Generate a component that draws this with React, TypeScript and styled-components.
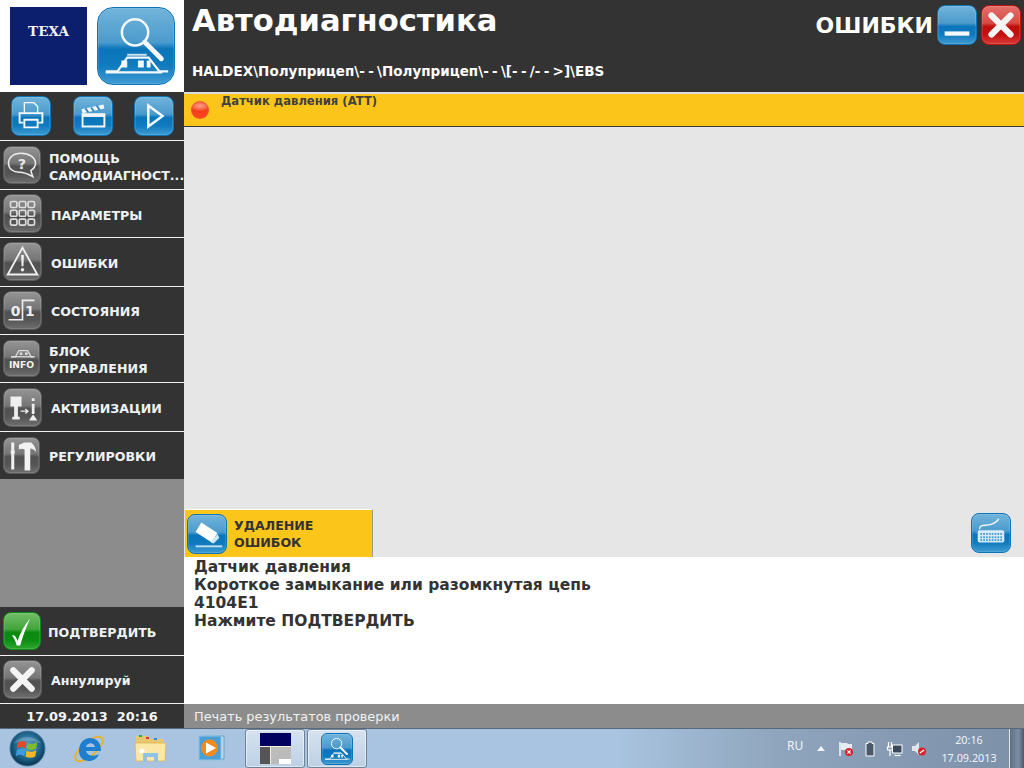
import * as React from 'react';
import styled, { createGlobalStyle, css } from 'styled-components';

const GlobalStyle = createGlobalStyle`
	html, body { margin: 0; padding: 0; background: #333; }
	body { font-family: "DejaVu Sans", Verdana, sans-serif; overflow: hidden; }
`;

type Tone = 'blue' | 'gray' | 'green' | 'red';

const tones = {
	blue: css`
		background: linear-gradient(#72b4db 0%, #4b9bcd 45%, #0a75ba 54%, #0f7abd 75%, #3f9bd2 100%);
		border-color: #0d74b6;
	`,
	gray: css`
		background: linear-gradient(#949494 0%, #767676 45%, #505050 54%, #555 75%, #6e6e6e 100%);
		border-color: #5a5a5a;
	`,
	green: css`
		background: linear-gradient(#72bd68 0%, #43a53a 45%, #0b8a10 54%, #0c8c12 75%, #2ea52d 100%);
		border-color: #10881a;
	`,
	red: css`
		background: linear-gradient(#e2706a 0%, #d84a44 45%, #c00d0d 54%, #c20f0f 75%, #d83a36 100%);
		border-color: #bc1313;
	`
};

const Tile = styled.div<{ $tone: Tone; $w: number; $h?: number }>`
	flex: none;
	box-sizing: border-box;
	width: ${(p) => p.$w}px;
	height: ${(p) => p.$h || p.$w}px;
	border: 1px solid;
	border-radius: ${(p) => Math.round(p.$w * 0.2)}px;
	box-shadow: inset 0 0 0 1px rgba(255, 255, 255, 0.12);
	${(p) => tones[p.$tone]};
	svg {
		display: block;
		width: 100%;
		height: 100%;
	}
`;

const Line = { fill: 'none', stroke: '#f4f8fb', strokeWidth: 2 };
const ThinLine = { fill: 'none', stroke: '#f4f8fb', strokeWidth: 1.4 };

const TrainIcon = () => (
	<svg viewBox="0 0 78 78">
		<circle cx="38" cy="25" r="13.5" fill="none" stroke="#f4f8fb" strokeWidth="2.6" />
		<path d="M48 35 L65 52" stroke="#f4f8fb" strokeWidth="5" strokeLinecap="round" />
		<path d="M8 65 H20 L30 51 H52 L63 65 H72" fill="none" stroke="#f4f8fb" strokeWidth="2.2" />
		<path d="M8 66 H66" stroke="#f4f8fb" strokeWidth="2.2" />
		<path d="M30 48 H50" stroke="#cfe3f0" strokeWidth="2" />
		<path d="M24 54 H30 V61 H24 Z M41 54 H47 V61 H41 Z M50 54 H54 V61 H50 Z" fill="#f4f8fb" />
	</svg>
);

const PrinterIcon = () => (
	<svg viewBox="0 0 40 40">
		<path d="M13 17 V6 H23 L27 10 V17" {...ThinLine} />
		<path d="M12 27 H8 V17 H32 V27 H28" {...Line} />
		<path d="M13 24 H27 V32 H13 Z" {...Line} />
	</svg>
);

const ClapperIcon = () => (
	<svg viewBox="0 0 40 40">
		<path d="M9 18 H32 V31 H9 Z" {...Line} />
		<path d="M8 13 L31 8 L32 12 L9 17 Z" fill="#f4f8fb" />
		<path d="M12 12 L15 16 M18 11 L21 15 M24 9 L27 14" stroke="#2f86bd" strokeWidth="2" />
		<path d="M9 18 H32 V21 H9 Z" fill="#f4f8fb" />
	</svg>
);

const PlayIcon = () => (
	<svg viewBox="0 0 40 40">
		<path d="M14 9 L29 20 L14 31 Z" fill="none" stroke="#f4f8fb" strokeWidth="2.6" />
	</svg>
);

const HelpIcon = () => (
	<svg viewBox="0 0 40 40">
		<path d="M19 7 C10 7 5 12 5 18 C5 24 10 28 17 28 C22 28 27 30 32 33 C31 30 30 28 30 26 C33 24 35 21 35 18 C35 12 28 7 19 7 Z" fill="none" stroke="#eee" strokeWidth="1.7" />
		<text x="20" y="24" textAnchor="middle" fontSize="16" fill="#e8e8e8" fontFamily="DejaVu Sans">?</text>
	</svg>
);

const GridIcon = () => (
	<svg viewBox="0 0 40 40">
		{[7, 16.5, 26].map((y) =>
			[7, 16.5, 26].map((x) => (
				<rect key={`${x}-${y}`} x={x} y={y} width="7" height="6.5" rx="1.5" fill="none" stroke="#ddd" strokeWidth="1.8" />
			))
		)}
	</svg>
);

const WarningIcon = () => (
	<svg viewBox="0 0 40 40">
		<path d="M20 5 L36 34 H4 Z" fill="none" stroke="#f0f0f0" strokeWidth="2" />
		<path d="M18.5 13 H21.5 L21 25 H19 Z" fill="#f0f0f0" />
		<circle cx="20" cy="29" r="1.9" fill="#f0f0f0" />
	</svg>
);

const StateIcon = () => (
	<svg viewBox="0 0 40 40">
		<path d="M5 30 H20 V9 H33" fill="none" stroke="#eee" strokeWidth="1.8" />
		<text x="12.5" y="26" textAnchor="middle" fontSize="15" fill="#eee" fontFamily="DejaVu Sans">0</text>
		<text x="28" y="26" textAnchor="middle" fontSize="15" fill="#eee" fontFamily="DejaVu Sans">1</text>
	</svg>
);

const InfoIcon = () => (
	<svg viewBox="0 0 40 40">
		<path d="M8 18 H13 L17 11 H27 L31 18 H35" fill="none" stroke="#ddd" strokeWidth="1.5" />
		<path d="M8 18 H33" stroke="#ddd" strokeWidth="1.5" />
		<path d="M18 13 H21 V16 H18 Z M24 13 H27 V16 H24 Z" fill="#ddd" />
		<text x="20" y="31" textAnchor="middle" fontSize="10.5" fontWeight="700" fill="#f2f2f2" fontFamily="DejaVu Sans">INFO</text>
	</svg>
);

const ActivateIcon = () => (
	<svg viewBox="0 0 40 40">
		<path d="M7 8 H19 V19 H15 V30 H17 V33 H9 V30 H11 V19 H7 Z" fill="#eee" />
		<path d="M18 24 H25 M23 21.5 L26 24 L23 26.5" fill="none" stroke="#eee" strokeWidth="1.4" />
		<path d="M30 10 H33 V13 H30 Z M30 16 H33 V27 H30 Z" fill="#eee" />
		<path d="M27 34 L31 28 H32 L36 34 Z" fill="#eee" />
	</svg>
);

const ToolsIcon = () => (
	<svg viewBox="0 0 40 40">
		<path d="M10 5 V14 M10 19 V36" stroke="#f2f2f2" strokeWidth="3.4" />
		<path d="M7.5 14 H12.5 L12 19 H8 Z" fill="#f2f2f2" />
		<path d="M17 8 L23 5 H31 C34 7 36 11 37 16 C34 13 32 12 30 12 V37 H23.5 V13 C21 12 19 12 17 13 Z" fill="#f2f2f2" />
	</svg>
);

const CheckIcon = () => (
	<svg viewBox="0 0 40 40">
		<path d="M9 25 C11 24 13 25 15 31 C18 22 23 13 29 6 C25 15 21 25 18 36 H14 C13 31 11 28 9 25 Z" fill="#fff" />
	</svg>
);

const CrossIcon = () => (
	<svg viewBox="0 0 40 40">
		<path d="M10 10 L30 30 M30 10 L10 30" stroke="#f4f4f4" strokeWidth="6.5" strokeLinecap="round" />
	</svg>
);

const MinimizeIcon = () => (
	<svg viewBox="0 0 40 40">
		<path d="M7 29 H33" stroke="#f4f8fb" strokeWidth="4.5" />
	</svg>
);

const EraserIcon = () => (
	<svg viewBox="0 0 40 40">
		<path d="M14 8 L31 19 L25 29 L8 18 Z" fill="#fff" />
		<path d="M8 33 H36" stroke="#bfe0f2" strokeWidth="2" />
		<path d="M24 29 L31 20 L33 24 L27 30 Z" fill="#cfe7f5" />
	</svg>
);

const KeyboardIcon = () => (
	<svg viewBox="0 0 40 40">
		<path d="M8 16 C8 10 14 13 20 11 C25 9 27 8 28 5" {...ThinLine} />
		<rect x="6" y="17" width="28" height="13" rx="2" fill="#d8ecf7" />
		{[20, 23.5, 26.5].map((y) =>
			[9, 12, 15, 18, 21, 24, 27, 30].map((x) => (
				<rect key={`${x}-${y}`} x={x - 0.2} y={y} width="1.8" height="2" fill="#4a9bcd" />
			))
		)}
	</svg>
);

const FlagIcon = () => (
	<svg viewBox="0 0 16 16" width="16" height="16">
		<path d="M2 1 V15" stroke="#fff" strokeWidth="1.4" />
		<path d="M3 2 H9 L10 3 H14 V9 H3 Z" fill="#e8edf2" />
		<circle cx="11" cy="11" r="4" fill="#d8242c" />
		<path d="M9.4 9.4 L12.6 12.6 M12.6 9.4 L9.4 12.6" stroke="#fff" strokeWidth="1.2" />
	</svg>
);

const BatteryIcon = () => (
	<svg viewBox="0 0 16 16" width="16" height="16">
		<path d="M6 1 H10 V2.5 H12 V15 H4 V2.5 H6 Z" fill="#4a5a6c" stroke="#fff" strokeWidth="1" />
	</svg>
);

const NetworkIcon = () => (
	<svg viewBox="0 0 16 16" width="17" height="16">
		<path d="M2 1 V6 M5 1 V6 M1 6 H6 V9 H1 Z M3.5 9 V15" stroke="#fff" strokeWidth="1.2" fill="none" />
		<rect x="6" y="4" width="9.5" height="8" fill="#39485a" stroke="#fff" strokeWidth="1" />
		<path d="M8 14.5 H14" stroke="#fff" strokeWidth="1.2" />
	</svg>
);

const VolumeIcon = () => (
	<svg viewBox="0 0 16 16" width="16" height="16">
		<path d="M1 5 H4 L8 1 V14 L4 10 H1 Z" fill="#dfe5ea" />
		<circle cx="11" cy="10.5" r="4" fill="#d8242c" />
		<path d="M8.8 12 L13.2 9" stroke="#fff" strokeWidth="1.4" />
	</svg>
);

const OrbIcon = () => (
	<svg viewBox="0 0 38 38" width="37" height="37">
		<defs>
			<radialGradient id="orb" cx="50%" cy="42%" r="60%">
				<stop offset="0%" stopColor="#5fa8cc" />
				<stop offset="65%" stopColor="#1a5e86" />
				<stop offset="100%" stopColor="#0a2c44" />
			</radialGradient>
		</defs>
		<circle cx="19" cy="19" r="18" fill="url(#orb)" stroke="#4d7d9c" strokeWidth="1" />
		<path d="M9 13 C12 11 15 11 18 13 L17 19 C14 17 11 17 8 19 Z" fill="#e8472a" />
		<path d="M19.5 13.5 C22 15 25 15 29 12 L28 19 C25 21 22 21 18.5 19.5 Z" fill="#7db93a" />
		<path d="M8 20.5 C11 18.5 14 18.5 17 20.5 L16 27 C13 25 10 25 7 27 Z" fill="#3d9be0" />
		<path d="M18 21 C21 23 24 23 28 20.5 L27 27 C24 29 21 29 17 27.5 Z" fill="#f6b81e" />
		<path d="M5 14 C10 5 28 5 33 14 C26 10 12 10 5 14 Z" fill="#fff" opacity="0.2" />
	</svg>
);

const ExplorerIcon = () => (
	<svg viewBox="0 0 34 34" width="34" height="34">
		<ellipse cx="17" cy="17" rx="17" ry="7" transform="rotate(-40 17 17)" fill="none" stroke="#e6b32e" strokeWidth="2" />
		<path d="M7 19 C7 11 12 6 18 6 C25 6 29 11 29 19 H14 C15 24 22 25 27 22 C25 27 21 29 17 29 C11 29 7 25 7 19 Z M14 15 H23 C22 10 15 10 14 15 Z" fill="#1f7fce" fillRule="evenodd" />
	</svg>
);

const FolderIcon = () => (
	<svg viewBox="0 0 34 32" width="34" height="32">
		<path d="M2 3 H14 L16 6 H30 V27 H2 Z" fill="#e7c66f" />
		<rect x="5" y="2" width="3" height="2" fill="#2aa84a" />
		<rect x="12" y="4" width="3" height="2" fill="#d33" />
		<rect x="20" y="5" width="3" height="2" fill="#38d" />
		<path d="M1 10 H32 L31 28 H2 Z" fill="#fbe7a6" stroke="#d9b75e" strokeWidth="0.8" />
		<path d="M9 29 V20 H24 V29 H20 V24 H13 V29 Z" fill="#8fc2e4" />
		<circle cx="8" cy="18" r="2.5" fill="#fff" />
	</svg>
);

const MediaIcon = () => (
	<svg viewBox="0 0 32 32" width="32" height="32">
		<path d="M7 3 H28 V26 H7 Z" fill="#bcd9ee" stroke="#6ea3c8" strokeWidth="1" />
		<path d="M3 3 H25 V27 H3 Z" fill="#4a9fd6" stroke="#8ec2e4" strokeWidth="1" />
		<circle cx="13.5" cy="15" r="8.5" fill="#f18a1f" />
		<path d="M10 9.5 L20 15 L10 20.5 Z" fill="#fff" />
	</svg>
);

const Page = styled.div`
	display: flex;
	flex-direction: column;
	width: 1024px;
	height: 768px;
	overflow: hidden;
`;

const Body = styled.div`
	display: flex;
	height: 728px;
`;

const Sidebar = styled.aside`
	display: flex;
	flex-direction: column;
	flex: none;
	width: 184px;
	background: #333;
`;

const Brand = styled.div`
	display: flex;
	align-items: center;
	gap: 10px;
	height: 92px;
	padding-left: 10px;
	background: #fff;
`;

const TexaLogo = styled.div`
	display: flex;
	align-items: flex-start;
	justify-content: center;
	box-sizing: border-box;
	width: 77px;
	height: 78px;
	padding-top: 16px;
	background: #0c1f6f;
	color: #f2f2f2;
	font: 700 13.5px "DejaVu Serif", serif;
`;

const Toolbar = styled.div`
	display: flex;
	align-items: center;
	justify-content: space-between;
	height: 49px;
	padding: 0 10px 1px 11px;
	box-sizing: border-box;
`;

const Menu = styled.nav`
	display: flex;
	flex-direction: column;
`;

const MenuRow = styled.div<{ $gap: number; $plain?: boolean }>`
	display: flex;
	align-items: center;
	gap: ${(p) => p.$gap}px;
	box-sizing: border-box;
	height: 48.4px;
	padding-left: 3px;
	border-top: ${(p) => (p.$plain ? '0' : '1px solid #f2f2f2')};
	color: #eef2f5;
	font-size: 12.6px;
	font-weight: 700;
	white-space: nowrap;
`;

const MenuLabel = styled.div`
	margin-top: 3px;
	line-height: 17px;
`;

const Spacer = styled.div`
	height: 128px;
	background: #8c8c8c;
`;

const SideFooter = styled.div`
	display: flex;
	align-items: center;
	justify-content: center;
	height: 25px;
	box-sizing: border-box;
	border-top: 1px solid #f2f2f2;
	color: #f4f4f4;
	font-size: 12.9px;
	font-weight: 700;
	white-space: pre;
`;

const Main = styled.main`
	display: flex;
	flex-direction: column;
	flex: 1;
	min-width: 0;
`;

const Header = styled.header`
	display: flex;
	justify-content: space-between;
	height: 92px;
	padding-left: 8px;
	box-sizing: border-box;
	background: #333;
	color: #fff;
`;

const HeaderText = styled.div`
	display: flex;
	flex-direction: column;
`;

const Title = styled.h1`
	margin: 3px 0 0;
	font-size: 30.6px;
	line-height: 36px;
	font-weight: 700;
`;

const Breadcrumb = styled.div`
	margin-top: 24px;
	font-size: 13.5px;
	line-height: 16px;
	font-weight: 700;
	white-space: nowrap;
`;

const Dash = styled.span`
	letter-spacing: 3.3px;
`;

const HeaderRight = styled.div`
	display: flex;
	align-items: flex-start;
	gap: 4px;
	padding: 5px 3px 0 0;
`;

const Section = styled.span`
	margin: 8px 0 0;
	font-size: 22px;
	line-height: 26px;
	font-weight: 700;
`;

const ErrorBar = styled.div`
	display: flex;
	flex: none;
	gap: 12px;
	height: 35px;
	box-sizing: border-box;
	padding: 1px 0 0 7px;
	background: #fcc51a;
	border-top: 2px solid #ddd;
	border-bottom: 1px solid #3a3a3a;
	color: #404040;
	font-size: 11.6px;
	font-weight: 700;
	line-height: 13px;
`;

const Led = styled.span`
	width: 18px;
	height: 18px;
	margin-top: 6px;
	border-radius: 50%;
	background: radial-gradient(ellipse 60% 30% at 50% 28%, #ffa08a 0%, rgba(255, 150, 120, 0) 100%),
		linear-gradient(#f85a38 0%, #f23c1c 50%, #ff4a18 100%);
	box-shadow: inset 0 0 0 1px #f05030;
`;

const Canvas = styled.div`
	flex: 1;
	background: #e6e6e6;
`;

const ActionRow = styled.div`
	display: flex;
	align-items: flex-start;
	justify-content: space-between;
	height: 48px;
	padding-right: 13px;
	background: #e6e6e6;
`;

const DeleteButton = styled.button`
	display: flex;
	align-items: center;
	gap: 7px;
	box-sizing: border-box;
	width: 188px;
	height: 48px;
	margin: 0 0 0 1px;
	padding: 0 0 0 2px;
	background: #fcc51a;
	border: 0;
	border-top: 1px solid #fff;
	border-right: 1px solid #999;
	color: #333;
	font: 700 12.6px/17px "DejaVu Sans", Verdana, sans-serif;
	text-align: left;
`;

const KeyboardSlot = styled.div`
	margin-top: 4px;
`;

const Message = styled.div`
	height: 147px;
	padding: 1px 0 0 10px;
	box-sizing: border-box;
	background: #fff;
	color: #333;
	font-size: 15.5px;
	font-weight: 700;
	line-height: 18px;
`;

const StatusBar = styled.div`
	display: flex;
	align-items: center;
	height: 24px;
	padding-left: 10px;
	background: #8c8c8c;
	color: #f2f2f2;
	font-size: 12.9px;
`;

const Taskbar = styled.footer`
	display: flex;
	align-items: stretch;
	height: 40px;
	box-sizing: border-box;
	border-top: 1px solid #56687c;
	background: linear-gradient(90deg, #a9c4e0 0%, #a9c4e0 60%, #8fa5bd 76%, #7c90a8 100%);
`;

const TaskItem = styled.div<{ $w: number; $active?: boolean }>`
	display: flex;
	align-items: center;
	justify-content: center;
	flex: none;
	box-sizing: border-box;
	width: ${(p) => p.$w}px;
	${(p) =>
		p.$active &&
		css`
			margin-right: 2px;
			border: 1px solid #6f8298;
			border-radius: 3px;
			background: linear-gradient(#d6e3f0, #bdd0e4);
			box-shadow: inset 0 0 0 1px rgba(255, 255, 255, 0.5);
		`};
`;

const Thumb = styled.div`
	display: grid;
	grid-template-columns: 10px 1fr;
	grid-template-rows: 13px 1fr;
	gap: 1px;
	width: 31px;
	height: 31px;
	background: #f4f0dc;
`;

const ThumbTop = styled.div`
	grid-column: 1 / 3;
	background: #02005e;
`;

const ThumbLeft = styled.div`
	background: #555;
`;

const ThumbRight = styled.div`
	display: flex;
	align-items: flex-end;
	justify-content: flex-end;
	background: #bbb;
`;

const ThumbCorner = styled.div`
	width: 12px;
	height: 5px;
	background: #fff;
`;

const Tray = styled.div`
	display: flex;
	align-items: center;
	margin-left: auto;
	color: #eef3f8;
	font-family: "Noto Sans", sans-serif;
	font-size: 12px;
`;

const Lang = styled.span`
	width: 30px;
	margin-bottom: 6px;
`;

const TrayIcons = styled.div`
	display: flex;
	align-items: center;
	gap: 8px;
`;

const TrayArrow = styled.span`
	width: 0;
	height: 0;
	margin-right: 5px;
	border: 4px solid transparent;
	border-top: 0;
	border-bottom: 5px solid #f4f6f8;
`;

const Clock = styled.div`
	width: 56px;
	margin: 0 12px 0 14px;
	font-size: 10.8px;
	line-height: 18px;
	text-align: center;
`;

const ShowDesktop = styled.div`
	align-self: stretch;
	width: 14px;
	border-left: 1px solid #dce4ec;
	background: linear-gradient(90deg, #5f7083, #7c8ea3 60%, #4b5a6b);
`;

const menuItems = [
	{ icon: <HelpIcon />, label: ['ПОМОЩЬ', 'САМОДИАГНОСТ...'], w: 38, gap: 8 },
	{ icon: <GridIcon />, label: ['ПАРАМЕТРЫ'], w: 39, gap: 9 },
	{ icon: <WarningIcon />, label: ['ОШИБКИ'], w: 39, gap: 9 },
	{ icon: <StateIcon />, label: ['СОСТОЯНИЯ'], w: 39, gap: 9 },
	{ icon: <InfoIcon />, label: ['БЛОК', 'УПРАВЛЕНИЯ'], w: 37, gap: 9 },
	{ icon: <ActivateIcon />, label: ['АКТИВИЗАЦИИ'], w: 39, gap: 9 },
	{ icon: <ToolsIcon />, label: ['РЕГУЛИРОВКИ'], w: 37, gap: 9 }
];

const App: React.FunctionComponent = () => {
	return (
		<Page>
			<GlobalStyle />
			<Body>
				<Sidebar>
					<Brand>
						<TexaLogo>TEXA</TexaLogo>
						<Tile $tone="blue" $w={78}>
							<TrainIcon />
						</Tile>
					</Brand>
					<Toolbar>
						<Tile $tone="blue" $w={40}>
							<PrinterIcon />
						</Tile>
						<Tile $tone="blue" $w={40}>
							<ClapperIcon />
						</Tile>
						<Tile $tone="blue" $w={40}>
							<PlayIcon />
						</Tile>
					</Toolbar>
					<Menu>
						{menuItems.map((item) => (
							<MenuRow key={item.label[0]} $gap={item.gap}>
								<Tile $tone="gray" $w={item.w}>
									{item.icon}
								</Tile>
								<MenuLabel>
									{item.label.map((text) => <div key={text}>{text}</div>)}
								</MenuLabel>
							</MenuRow>
						))}
					</Menu>
					<Spacer />
					<MenuRow $gap={7} $plain>
						<Tile $tone="green" $w={38}>
							<CheckIcon />
						</Tile>
						<MenuLabel>ПОДТВЕРДИТЬ</MenuLabel>
					</MenuRow>
					<MenuRow $gap={9}>
						<Tile $tone="gray" $w={39}>
							<CrossIcon />
						</Tile>
						<MenuLabel>Аннулируй</MenuLabel>
					</MenuRow>
					<SideFooter>17.09.2013  20:16</SideFooter>
				</Sidebar>
				<Main>
					<Header>
						<HeaderText>
							<Title>Автодиагностика</Title>
							<Breadcrumb>
								HALDEX\Полуприцеп\<Dash>--</Dash>\Полуприцеп\<Dash>--</Dash>\[<Dash>--</Dash>/<Dash>--</Dash>&gt;]\EBS
							</Breadcrumb>
						</HeaderText>
						<HeaderRight>
							<Section>ОШИБКИ</Section>
							<Tile $tone="blue" $w={40}>
								<MinimizeIcon />
							</Tile>
							<Tile $tone="red" $w={40}>
								<CrossIcon />
							</Tile>
						</HeaderRight>
					</Header>
					<ErrorBar>
						<Led />
						Датчик давления (ATT)
					</ErrorBar>
					<Canvas />
					<ActionRow>
						<DeleteButton>
							<Tile $tone="blue" $w={40}>
								<EraserIcon />
							</Tile>
							<span>
								УДАЛЕНИЕ
								<br />
								ОШИБОК
							</span>
						</DeleteButton>
						<KeyboardSlot>
							<Tile $tone="blue" $w={40}>
								<KeyboardIcon />
							</Tile>
						</KeyboardSlot>
					</ActionRow>
					<Message>
						<div>Датчик давления</div>
						<div>Короткое замыкание или разомкнутая цепь</div>
						<div>4104E1</div>
						<div>Нажмите ПОДТВЕРДИТЬ</div>
					</Message>
					<StatusBar>Печать результатов проверки</StatusBar>
				</Main>
			</Body>
			<Taskbar>
				<TaskItem $w={54}>
					<OrbIcon />
				</TaskItem>
				<TaskItem $w={70}>
					<ExplorerIcon />
				</TaskItem>
				<TaskItem $w={54}>
					<FolderIcon />
				</TaskItem>
				<TaskItem $w={67}>
					<MediaIcon />
				</TaskItem>
				<TaskItem $w={60} $active>
					<Thumb>
						<ThumbTop />
						<ThumbLeft />
						<ThumbRight>
							<ThumbCorner />
						</ThumbRight>
					</Thumb>
				</TaskItem>
				<TaskItem $w={60} $active>
					<Tile $tone="blue" $w={32}>
						<TrainIcon />
					</Tile>
				</TaskItem>
				<Tray>
					<Lang>RU</Lang>
					<TrayIcons>
						<TrayArrow />
						<FlagIcon />
						<BatteryIcon />
						<NetworkIcon />
						<VolumeIcon />
					</TrayIcons>
					<Clock>
						20:16
						<br />
						17.09.2013
					</Clock>
					<ShowDesktop />
				</Tray>
			</Taskbar>
		</Page>
	);
};

export default App;
